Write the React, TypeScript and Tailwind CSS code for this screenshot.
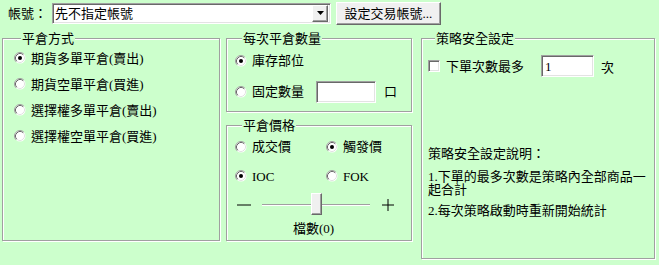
import React from "react";

// classic win32 3d edges
const SUNKEN =
  "border border-t-[#a0a0a0] border-l-[#a0a0a0] border-r-white border-b-white shadow-[inset_1px_1px_0_#696969,inset_-1px_-1px_0_#e3e3e3]";
const RAISED =
  "border border-t-white border-l-white border-r-[#696969] border-b-[#696969] shadow-[inset_-1px_-1px_0_#a0a0a0]";

function Radio({ checked = false }: { checked?: boolean }) {
  return (
    <svg width="12" height="12" viewBox="0 0 12 12" className="shrink-0">
      <circle cx="6" cy="6" r="5.5" fill="#fff" />
      <path d="M2.11 9.89 A5.5 5.5 0 0 1 9.89 2.11" stroke="#a0a0a0" fill="none" />
      <path d="M2.82 9.18 A4.5 4.5 0 0 1 9.18 2.82" stroke="#696969" fill="none" />
      <path d="M9.18 2.82 A4.5 4.5 0 0 1 2.82 9.18" stroke="#e3e3e3" fill="none" />
      {checked && <circle cx="6" cy="6" r="2" fill="#000" />}
    </svg>
  );
}

function Option({ label, checked }: { label: string; checked?: boolean }) {
  return (
    <div className="flex items-center gap-[5px]">
      <Radio checked={checked} />
      <span>{label}</span>
    </div>
  );
}

function Group({
  title,
  className,
  children,
}: {
  title: string;
  className?: string;
  children: React.ReactNode;
}) {
  return (
    <fieldset
      className={`border border-[#a0a0a0] shadow-[inset_1px_1px_0_#fff,1px_1px_0_#fff] ${className ?? ""}`}
    >
      <legend className="ml-[7px] px-px bg-[#ccffcc]">{title}</legend>
      {children}
    </fieldset>
  );
}

export default function App() {
  return (
    <div className="w-[659px] h-[265px] bg-[#ccffcc] text-black text-[13px] leading-[13px] font-['Liberation_Serif','Noto_Sans_CJK_TC',serif] overflow-hidden">
      {/* account row */}
      <div className="flex items-center h-[26px] pl-[8px]">
        <span className="w-[44px]">帳號：</span>
        <div className={`w-[279px] h-[21px] bg-white flex items-center pl-[2px] pr-[2px] ${SUNKEN}`}>
          <span className="flex-1">先不指定帳號</span>
          <div className={`w-[16px] h-[17px] bg-[#f0f0f0] flex items-center justify-center ${RAISED}`}>
            <svg width="7" height="4" viewBox="0 0 7 4">
              <path d="M0 0 H7 L3.5 4 Z" fill="#000" />
            </svg>
          </div>
        </div>
        <button className={`ml-[5px] w-[105px] h-[23px] bg-[#f0f0f0] flex items-center justify-center ${RAISED}`}>
          設定交易帳號...
        </button>
      </div>

      <div className="flex mt-[6px] pl-[2px]">
        {/* close mode */}
        <Group title="平倉方式" className="w-[218px] h-[209px] pl-[11px]">
          <div className="flex flex-col">
            {[
              ["期貨多單平倉(賣出)", true],
              ["期貨空單平倉(買進)", false],
              ["選擇權多單平倉(賣出)", false],
              ["選擇權空單平倉(買進)", false],
            ].map(([label, checked]) => (
              <div key={label as string} className="h-[26px] flex items-center">
                <Option label={label as string} checked={checked as boolean} />
              </div>
            ))}
          </div>
        </Group>

        <div className="ml-[6px] w-[186px] flex flex-col">
          {/* quantity */}
          <Group title="每次平倉數量" className="h-[80px] pl-[8px]">
            <div className="h-[31px] flex items-center">
              <Option label="庫存部位" checked />
            </div>
            <div className="h-[31px] flex items-center">
              <Option label="固定數量" />
              <div className={`ml-[12px] w-[60px] h-[22px] bg-white ${SUNKEN}`} />
              <span className="ml-[8px]">口</span>
            </div>
          </Group>

          {/* price */}
          <Group title="平倉價格" className="mt-[7px] h-[122px] pl-[8px]">
            <div className="h-[29px] flex items-center">
              <div className="w-[91px]">
                <Option label="成交價" />
              </div>
              <Option label="觸發價" checked />
            </div>
            <div className="h-[30px] flex items-center">
              <div className="w-[91px]">
                <Option label="IOC" checked />
              </div>
              <Option label="FOK" />
            </div>
            <div className="mt-[3px] h-[22px] flex items-center">
              <svg width="14" height="2" viewBox="0 0 14 2" className="ml-[2px]">
                <path d="M0 1 H14" stroke="#000" />
              </svg>
              <div className="ml-[11px] w-[108px] relative flex items-center">
                <div className="w-full h-[2px] border-t border-t-[#a0a0a0] border-b border-b-white" />
                <div className={`absolute left-[49px] top-[-11px] w-[11px] h-[22px] bg-[#f0f0f0] ${RAISED}`} />
              </div>
              <svg width="12" height="12" viewBox="0 0 12 12" className="ml-[12px]">
                <path d="M0 6 H12 M6 0 V12" stroke="#000" />
              </svg>
            </div>
            <div className="mt-[6px] pl-[58px]">檔數(0)</div>
          </Group>
        </div>

        {/* safety */}
        <Group title="策略安全設定" className="ml-[9px] w-[234px] h-[227px] pl-[6px]">
          <div className="mt-[10px] h-[22px] flex items-center">
            <div className={`w-[12px] h-[12px] bg-white ${SUNKEN}`} />
            <span className="ml-[6px]">下單次數最多</span>
            <div className={`ml-[17px] w-[53px] h-[22px] bg-white flex items-center pl-[3px] ${SUNKEN}`}>1</div>
            <span className="ml-[7px] mt-[2px]">次</span>
          </div>
          <div className="mt-[70px] w-[222px]">
            <p>策略安全設定說明：</p>
            <p className="mt-[10px]">1.下單的最多次數是策略內全部商品一起合計</p>
            <p className="mt-[8px]">2.每次策略啟動時重新開始統計</p>
          </div>
        </Group>
      </div>
    </div>
  );
}
